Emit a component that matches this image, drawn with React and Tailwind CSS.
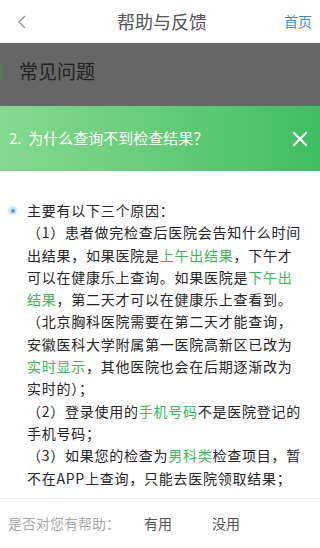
import React from "react";

const G = ({ children }) => <span className="text-[#3cb95a]">{children}</span>;

const lines = [
  <>主要有以下三个原因：</>,
  <>（1）患者做完检查后医院会告知什么时间</>,
  <>出结果，如果医院是<G>上午出结果</G>，下午才</>,
  <>可以在健康乐上查询。如果医院是<G>下午出</G></>,
  <><G>结果</G>，第二天才可以在健康乐上查看到。</>,
  <>（北京胸科医院需要在第二天才能查询，</>,
  <>安徽医科大学附属第一医院高新区已改为</>,
  <><G>实时显示</G>，其他医院也会在后期逐渐改为</>,
  <>实时的）；</>,
  <>（2）登录使用的<G>手机号码</G>不是医院登记的</>,
  <>手机号码；</>,
  <>（3）如果您的检查为<G>男科类</G>检查项目，暂</>,
  <>不在APP上查询，只能去医院领取结果；</>,
];

export default function App() {
  return (
    <div
      className="w-[320px] h-[548px] flex flex-col bg-white overflow-hidden"
      style={{ fontFamily: '"Noto Sans CJK SC", "Noto Sans", sans-serif' }}
    >
      <div className="h-[43px] flex items-center justify-between px-[14px] shrink-0">
        <svg width="12" height="16" viewBox="0 0 12 16" className="ml-[2px]">
          <path d="M9 2 L3 8 L9 14" fill="none" stroke="#999" strokeWidth="1.4" />
        </svg>
        <div className="text-[18px] text-[#555] ml-[12px]">帮助与反馈</div>
        <div className="text-[14px] text-[#3b8ed6] mr-[-6px]">首页</div>
      </div>
      <div className="h-[63px] bg-[#666666] flex items-start pt-[14px] shrink-0">
        <div className="w-[3px] h-[14px] bg-[#4f7f4f] mt-[8px]" />
        <div className="ml-[16px] text-[19px] text-[#222]">常见问题</div>
      </div>
      <div className="h-[65px] bg-gradient-to-r from-[#84da8f] to-[#3dbf5f] flex items-center justify-between pl-[9px] pr-[12px] shrink-0">
        <div className="text-[15px] text-white">2.&nbsp;&nbsp;为什么查询不到检查结果？</div>
        <svg width="16" height="16" viewBox="0 0 16 16">
          <path d="M2 2 L14 14 M14 2 L2 14" stroke="white" strokeWidth="2.2" strokeLinecap="round" />
        </svg>
      </div>
      <div className="flex-1 flex pt-[28px] pl-[8px]">
        <div className="w-[19px] shrink-0 pt-[7px]">
          <div className="w-[9px] h-[9px] rounded-full bg-[#cfe8fb] flex items-center justify-center">
            <div className="w-[4px] h-[4px] rounded-full bg-[#4aa3ee]" />
          </div>
        </div>
        <div className="text-[14px] leading-[22.3px] tracking-[0.75px] text-[#262626]">
          {lines.map((l, i) => (
            <div key={i} className="whitespace-nowrap">
              {l}
            </div>
          ))}
        </div>
      </div>
      <div className="h-[50px] border-t border-[#ececec] flex items-center shrink-0 text-[14px]">
        <div className="pl-[8px] w-[144px] text-[#aaa]">是否对您有帮助：</div>
        <div className="w-[68px] text-[#555]">有用</div>
        <div className="text-[#555]">没用</div>
      </div>
    </div>
  );
}
